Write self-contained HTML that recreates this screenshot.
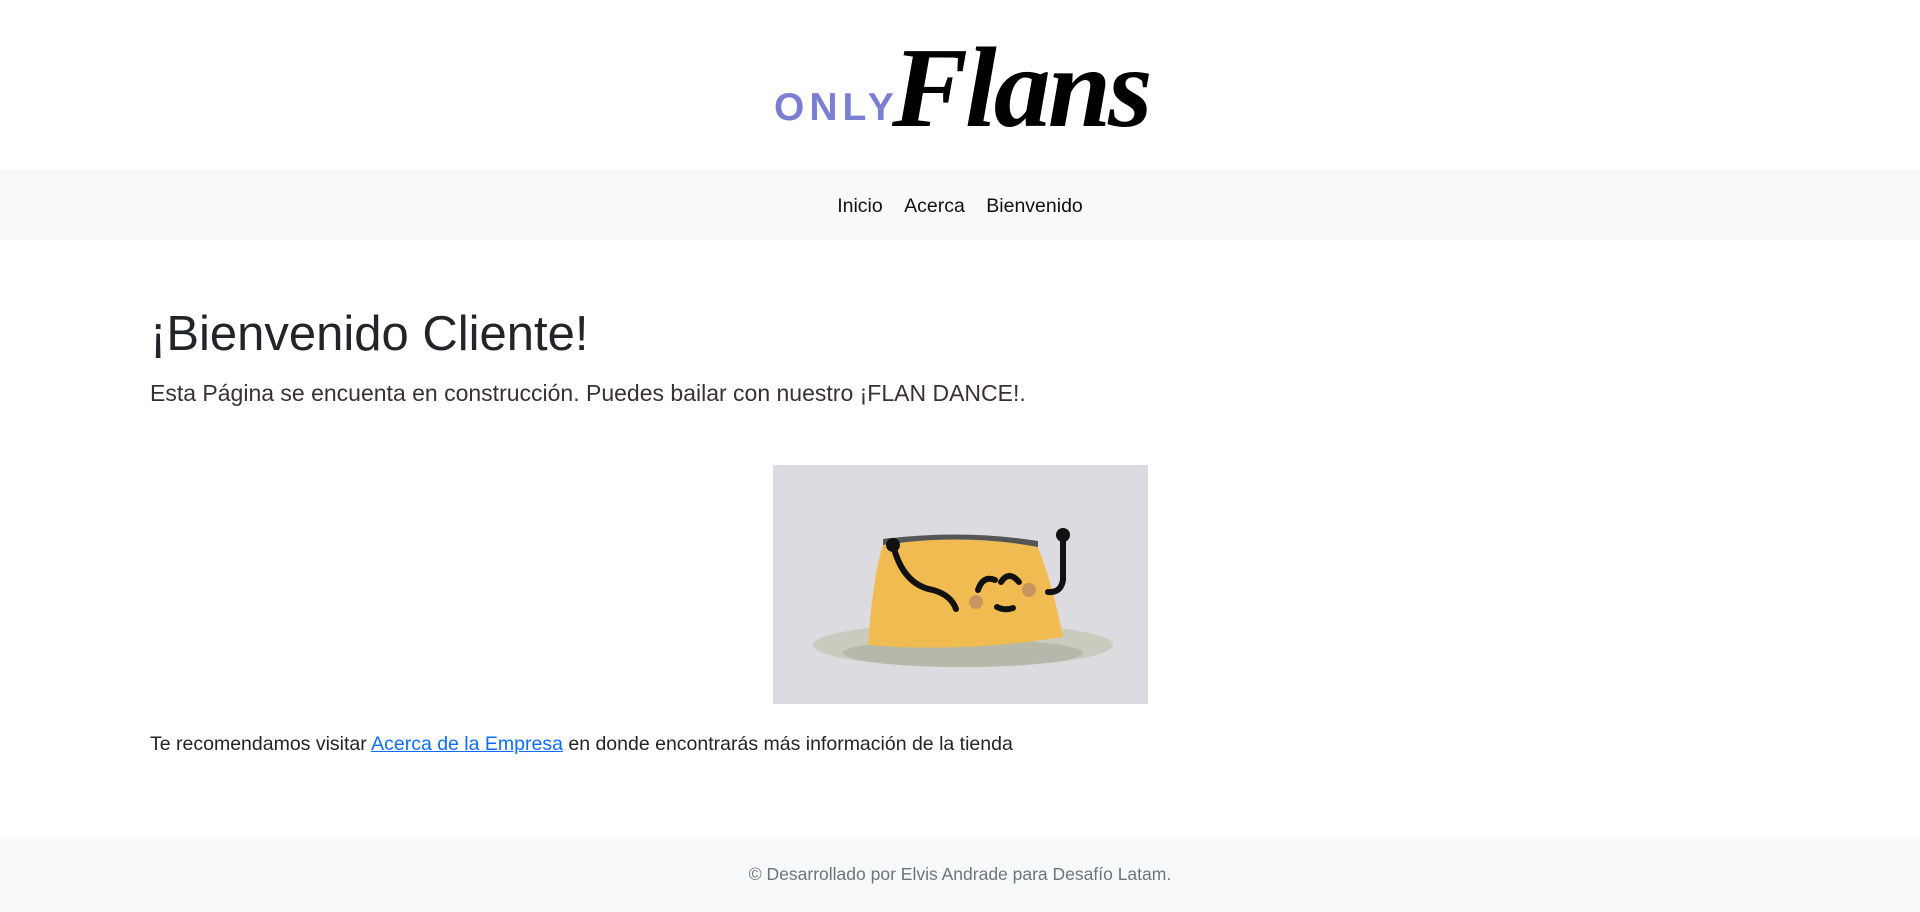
<!DOCTYPE html>
<html><head><meta charset="utf-8"><style>
body{margin:0;width:1920px;height:912px;overflow:hidden;background:#fff;font-family:"Liberation Sans",sans-serif;color:#212529}
.hdr{height:170px;position:relative}
.only{position:absolute;left:774px;top:86px;font-size:39px;font-weight:bold;letter-spacing:5px;color:#7a7fd1}
.flans{position:absolute;left:892px;top:22px;font-family:"Liberation Serif",serif;font-style:italic;font-weight:bold;font-size:114px;color:#000;letter-spacing:-3px}
nav{height:70px;background:#f8f9fa;text-align:center;font-size:19.5px;line-height:72px}
nav span{margin:0 8px;color:#111}
h1{position:absolute;left:150px;top:305px;margin:0;font-size:49px;font-weight:500;line-height:1.2}
.lead{position:absolute;left:150px;top:380px;font-size:23px;color:#3a2f35}
.img{position:absolute;left:773px;top:465px}
.p{position:absolute;left:150px;top:733px;font-size:19.5px}
.p a{color:#0d6efd}
footer{position:absolute;left:0;top:839px;width:1920px;height:73px;background:#f8f9fa;text-align:center;line-height:70px;font-size:17.5px;color:#6c757d}
</style></head><body>
<div class="hdr"><div class="only">ONLY</div><div class="flans">Flans</div></div>
<nav><span>Inicio</span> <span>Acerca</span> <span>Bienvenido</span></nav>
<h1>¡Bienvenido Cliente!</h1>
<div class="lead">Esta Página se encuenta en construcción. Puedes bailar con nuestro ¡FLAN DANCE!.</div>
<svg class="img" width="375" height="239" viewBox="0 0 375 239">
<rect width="375" height="239" fill="#dcdbe0"/>
<ellipse cx="190" cy="180" rx="150" ry="22" fill="#c9cbbf"/>
<ellipse cx="190" cy="188" rx="120" ry="14" fill="#b6b8aa"/>
<path d="M95 180 Q100 110 110 80 Q190 68 265 82 Q280 120 290 172 Q190 188 95 180Z" fill="#f0bc52"/>
<path d="M110 80 Q190 68 265 82 L265 76 Q190 64 110 74Z" fill="#555"/>
<g fill="none" stroke="#111" stroke-width="6" stroke-linecap="round">
<path d="M120 80 Q130 120 160 125 Q178 130 183 144"/>
<path d="M290 72 L290 115 Q288 128 275 127"/>
<path d="M205 125 Q210 110 222 115"/><path d="M228 117 Q236 105 246 117"/>
<path d="M224 142 Q232 146 240 143"/></g>
<circle cx="120" cy="80" r="7" fill="#111"/><circle cx="290" cy="70" r="7" fill="#111"/>
<circle cx="203" cy="137" r="7" fill="#c9945f"/><circle cx="256" cy="125" r="7" fill="#c9945f"/>
</svg>
<div class="p">Te recomendamos visitar <a href="#">Acerca de la Empresa</a> en donde encontrarás más información de la tienda</div>
<footer>© Desarrollado por Elvis Andrade para Desafío Latam.</footer>
</body></html>
